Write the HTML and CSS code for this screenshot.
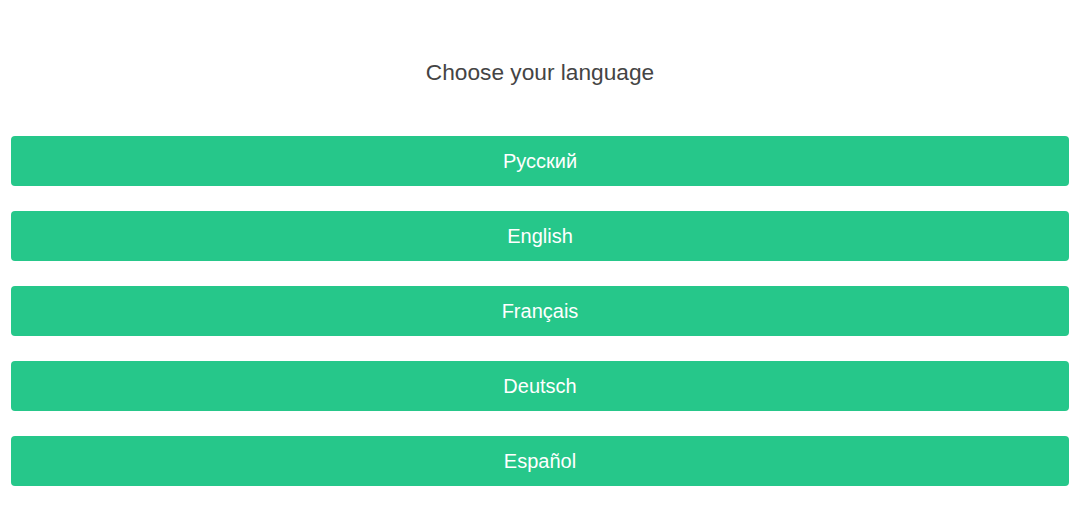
FILE: index.html
```html
<!DOCTYPE html>
<html lang="en">
<head>
<meta charset="utf-8">
<title>Choose your language</title>
<link rel="stylesheet" href="styles.css">
</head>
<body>
<main class="page">
  <h1 class="title">Choose your language</h1>
  <div class="langs">
    <button class="lang">Русский</button>
    <button class="lang">English</button>
    <button class="lang">Français</button>
    <button class="lang">Deutsch</button>
    <button class="lang">Español</button>
  </div>
</main>
</body>
</html>
```
FILE: styles.css
```css
html, body {
  margin: 0;
  padding: 0;
  background: #fff;
}
.page {
  padding: 58px 14px 0 11px;
  font-family: "Liberation Sans", Arial, sans-serif;
}
.title {
  margin: 0;
  text-align: center;
  font-weight: normal;
  font-size: 22.7px;
  line-height: 28px;
  color: #444;
}
.langs {
  margin-top: 50px;
  display: flex;
  flex-direction: column;
  gap: 25px;
}
.lang {
  display: block;
  width: 100%;
  height: 50px;
  border: 0;
  border-radius: 4px;
  background: #26c78a;
  color: #fff;
  font-family: "Liberation Sans", Arial, sans-serif;
  font-size: 20px;
  cursor: pointer;
}
```
